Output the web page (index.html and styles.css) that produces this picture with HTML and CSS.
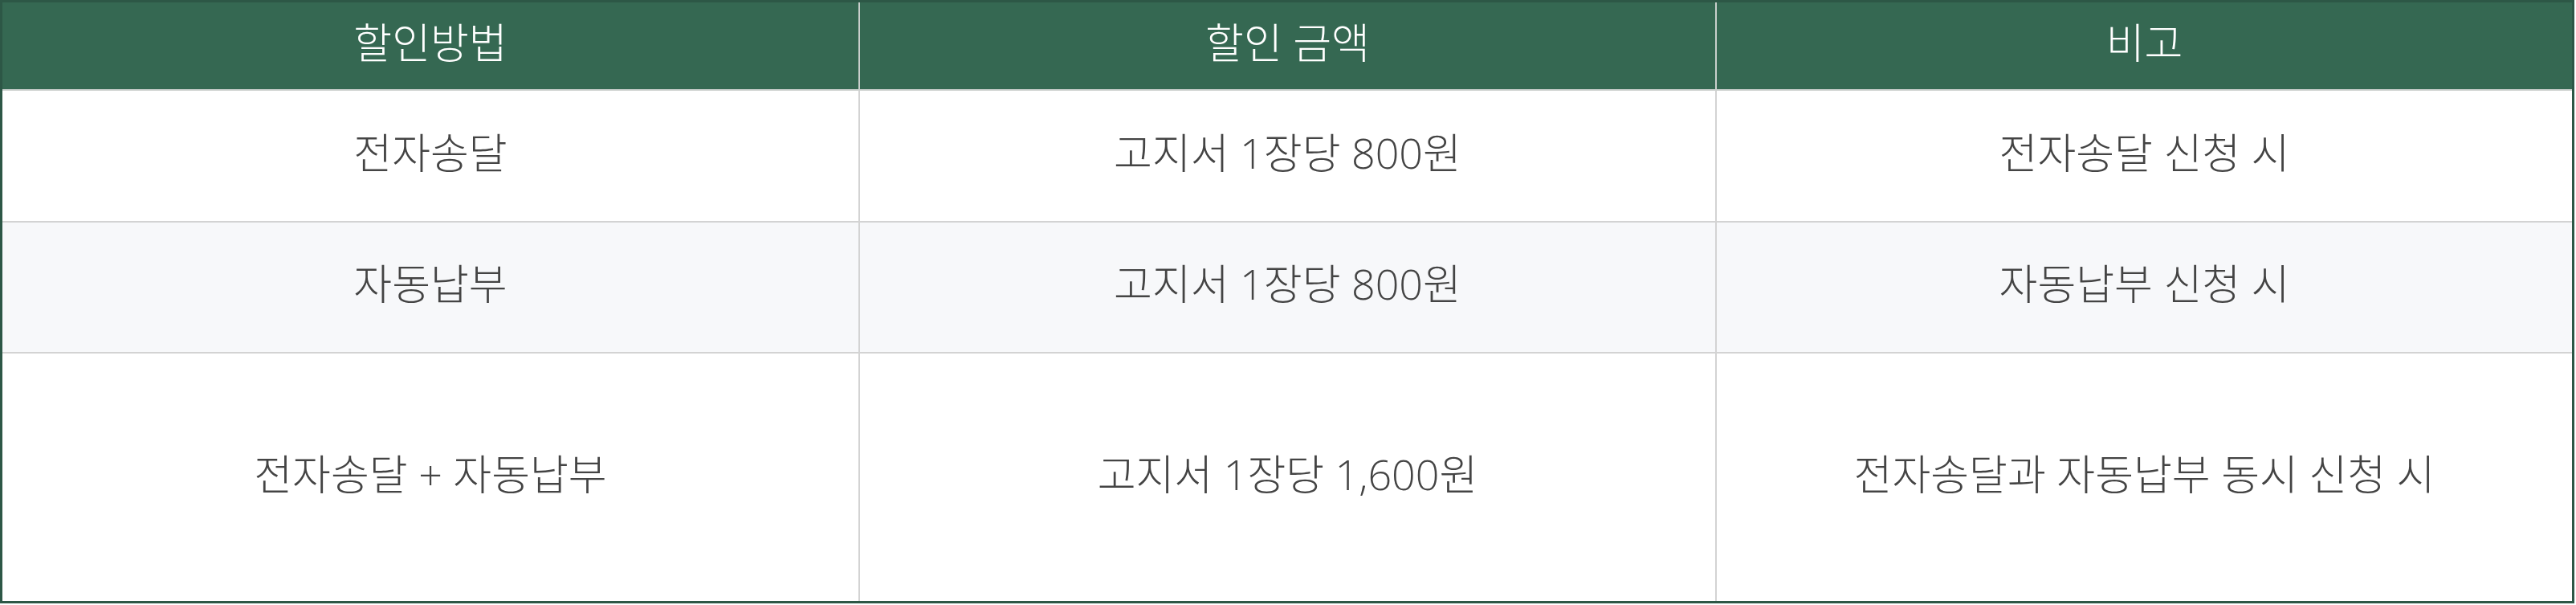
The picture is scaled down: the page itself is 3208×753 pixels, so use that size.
FILE: index.html
```html
<!DOCTYPE html>
<html lang="ko">
<head>
<meta charset="utf-8">
<title>할인방법</title>
<link rel="stylesheet" href="styles.css">
</head>
<body>
<div class="table">
  <div class="cell head">할인방법</div>
  <div class="cell head">할인 금액</div>
  <div class="cell head last">비고</div>

  <div class="cell">전자송달</div>
  <div class="cell">고지서 1장당 800원</div>
  <div class="cell last">전자송달 신청 시</div>

  <div class="cell alt">자동납부</div>
  <div class="cell alt">고지서 1장당 800원</div>
  <div class="cell alt last">자동납부 신청 시</div>

  <div class="cell bottom">전자송달 + 자동납부</div>
  <div class="cell bottom">고지서 1장당 1,600원</div>
  <div class="cell bottom last">전자송달과 자동납부 동시 신청 시</div>
</div>
</body>
</html>
```

FILE: styles.css
```css
html, body {
  margin: 0;
  padding: 0;
  background: #ffffff;
}

.table {
  display: grid;
  grid-template-columns: 1068px 1067px 1065px;
  grid-template-rows: 110px 164px 163px 308px;
  width: 3206px;
  box-sizing: border-box;
  border: 3px solid #2d5746;
  font-family: "Open Sans", "Noto Sans CJK KR", sans-serif;
  font-size: 52px;
  font-weight: 300;
  line-height: 1.2;
  color: #444444;
}

.cell {
  display: flex;
  align-items: center;
  justify-content: center;
  box-sizing: border-box;
  padding-bottom: 8px;
  border-right: 2px solid #d3d3d3;
  border-bottom: 2px solid #d3d3d3;
  background: #ffffff;
}

.cell.last {
  border-right: none;
}

.cell.bottom {
  border-bottom: none;
}

.cell.head {
  background: #356852;
  color: #ffffff;
  border-right-color: #c9cfcc;
  border-bottom-color: #cfd3d1;
}

.cell.alt {
  background: #f7f8fa;
}
```
